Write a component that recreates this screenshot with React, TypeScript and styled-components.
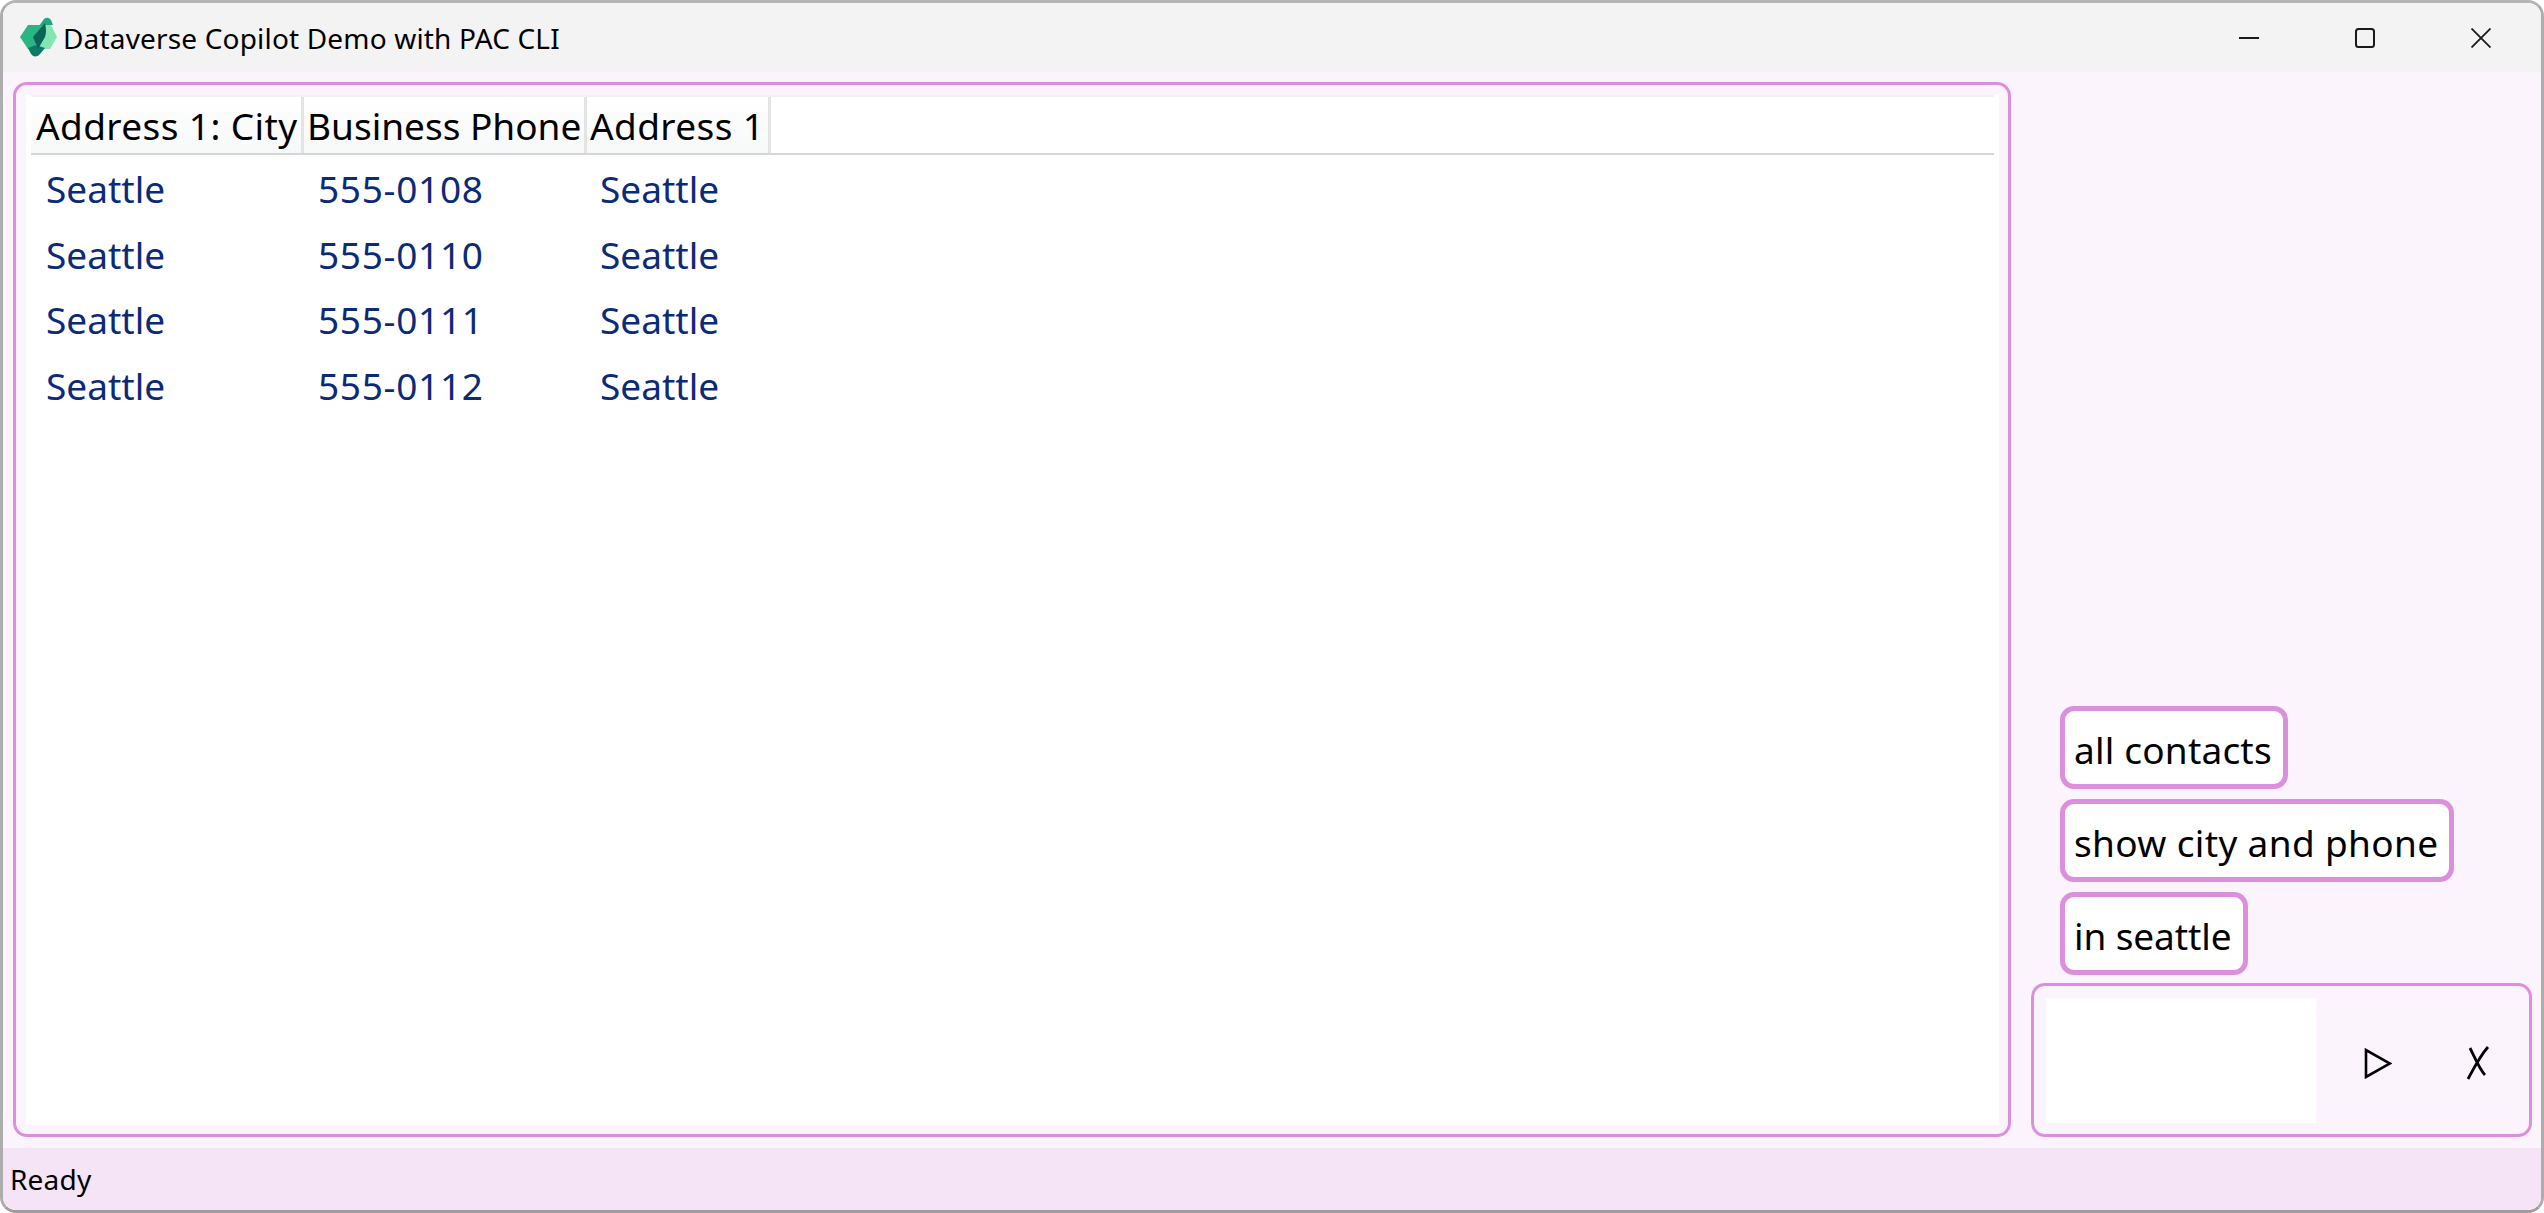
import styled, { createGlobalStyle } from 'styled-components'

const GlobalStyle = createGlobalStyle`
  html, body {
    margin: 0;
    padding: 0;
    background: #fff;
  }
  * {
    box-sizing: border-box;
  }
`

const FONT = `"Noto Sans", "Open Sans", sans-serif`

const Window = styled.div`
  width: 2544px;
  height: 1213px;
  display: flex;
  flex-direction: column;
  border: 3px solid #adadad;
  border-top-color: #b5b5b5;
  border-bottom-color: #9c9c9c;
  border-radius: 16px;
  overflow: hidden;
  background: #fbf4fc;
  font-family: ${FONT};
  color: #000;
`

const TitleBar = styled.div`
  height: 69px;
  flex: none;
  display: flex;
  align-items: center;
  padding-left: 17px;
  background: #f3f3f3;
`

const TitleText = styled.div`
  margin-left: 6px;
  font-size: 28px;
  letter-spacing: 0.17px;
  white-space: nowrap;
`

const WindowButtons = styled.div`
  margin-left: auto;
  display: flex;
  align-items: center;
  padding-right: 2px;
`

const WindowButton = styled.div`
  width: 116px;
  height: 20px;
  display: flex;
  align-items: center;
  justify-content: center;
`

const Body = styled.div`
  flex: 1;
  min-height: 0;
  display: flex;
  gap: 20px;
  padding: 10px 9px 11px 10px;
`

const GridPanel = styled.div`
  flex: 1;
  min-width: 0;
  display: flex;
  border: 3px solid #dd8fdd;
  border-radius: 14px;
  padding: 10px 9px 9px 10px;
`

const DataGrid = styled.div`
  flex: 1;
  background: #fff;
  padding: 0 5px;
`

const HeaderRow = styled.div`
  display: flex;
  height: 60px;
  border-top: 2px solid #f5f0f5;
  border-bottom: 2px solid #d6d6d6;
`

const HeaderCell = styled.div<{ $width: number; $pad: number; $spacing: number }>`
  width: ${({ $width }) => $width}px;
  flex: none;
  padding-left: ${({ $pad }) => $pad}px;
  font-size: 37px;
  letter-spacing: ${({ $spacing }) => $spacing}px;
  line-height: 57px;
  white-space: nowrap;
  background: linear-gradient(#ffffff, #f7f8f9);
  border-right: 3px solid #e4e4e4;
`

const Rows = styled.div`
  display: flex;
  flex-direction: column;
  padding-top: 1px;
`

const DataRow = styled.div`
  display: flex;
  height: 65.5px;
  align-items: center;
`

const DataCell = styled.div<{ $width: number; $spacing: number }>`
  width: ${({ $width }) => $width}px;
  flex: none;
  padding-left: 15px;
  font-size: 37px;
  letter-spacing: ${({ $spacing }) => $spacing}px;
  color: #0b2a78;
  white-space: nowrap;
`

const SidePanel = styled.div`
  width: 501px;
  flex: none;
  display: flex;
  flex-direction: column;
  justify-content: flex-end;
`

const Chips = styled.div`
  display: flex;
  flex-direction: column;
  align-items: flex-start;
  gap: 10px;
  padding-left: 29px;
  margin-bottom: 8px;
`

const Chip = styled.div<{ $spacing: number }>`
  height: 83px;
  display: flex;
  align-items: center;
  padding: 3px 11px 0 9px;
  background: #fff;
  border: 5px solid #dc90dc;
  border-radius: 14px;
  font-size: 37px;
  letter-spacing: ${({ $spacing }) => $spacing}px;
  white-space: nowrap;
`

const InputPanel = styled.div`
  height: 154px;
  display: flex;
  align-items: center;
  border: 3px solid #dd8fdd;
  border-radius: 14px;
  padding: 0 0 0 12px;
`

const InputBox = styled.div`
  width: 270px;
  height: 125px;
  flex: none;
  background: #fff;
`

const IconSlot = styled.div<{ $left: number }>`
  flex: none;
  margin-left: ${({ $left }) => $left}px;
  margin-top: 6px;
  display: flex;
`

const StatusBar = styled.div`
  height: 62px;
  flex: none;
  display: flex;
  align-items: center;
  padding-left: 7px;
  background: #f5e3f6;
  font-size: 28px;
  letter-spacing: 0.2px;
`

const headers = [
  { label: 'Address 1: City', width: 273, pad: 5, spacing: 0.4 },
  { label: 'Business Phone', width: 283, pad: 3, spacing: 0 },
  { label: 'Address 1', width: 184, pad: 3, spacing: 0.4 },
]
const contacts = ['555-0108', '555-0110', '555-0111', '555-0112']
const suggestions = [
  { text: 'all contacts', spacing: 0.2 },
  { text: 'show city and phone', spacing: 0.35 },
  { text: 'in seattle', spacing: -0.1 },
]

const AppLogo = () => (
  <svg width="37" height="41" viewBox="0 0 37 41">
    <path d="M8 8 H24 L14 32 H8 L0 20 Z" fill="#2bb583" />
    <path d="M24 8 H31 L37 20 L30 32 H16 Z" fill="#82e6b2" />
    <path d="M19 9 L24 2 Q28 -1 31 3 L33 8 H24 Z" fill="#23a583" />
    <path d="M8 31 L11 37 Q15 42 20 37 L25 31 L16 28 Z" fill="#0d7a64" />
    <path d="M25 6 L13 20 L18 32 L25 20 Q27 15 25 6 Z" fill="#0b6557" />
  </svg>
)

const MinimizeIcon = () => (
  <svg width="20" height="20" viewBox="0 0 20 20">
    <path d="M0 10 H20" stroke="#1a1a1a" strokeWidth="2" />
  </svg>
)

const MaximizeIcon = () => (
  <svg width="20" height="20" viewBox="0 0 20 20">
    <rect x="1" y="1" width="18" height="18" rx="2.5" fill="none" stroke="#1a1a1a" strokeWidth="2" />
  </svg>
)

const CloseIcon = () => (
  <svg width="20" height="20" viewBox="0 0 20 20">
    <path d="M0.5 0.5 L19.5 19.5 M19.5 0.5 L0.5 19.5" stroke="#1a1a1a" strokeWidth="1.8" />
  </svg>
)

const SendIcon = () => (
  <svg width="28" height="31" viewBox="0 0 28 31">
    <path d="M2 2 V29 L26 15.5 Z" fill="none" stroke="#000" strokeWidth="2.6" />
  </svg>
)

const ClearIcon = () => (
  <svg width="23" height="34" viewBox="0 0 23 34">
    <path d="M4 2 C8 10 14 24 19 29 M22 1 C14 10 8 22 2 33" fill="none" stroke="#000" strokeWidth="2.8" />
  </svg>
)

export default function App() {
  return (
    <>
      <GlobalStyle />
      <Window>
        <TitleBar>
          <AppLogo />
          <TitleText>Dataverse Copilot Demo with PAC CLI</TitleText>
          <WindowButtons>
            <WindowButton>
              <MinimizeIcon />
            </WindowButton>
            <WindowButton>
              <MaximizeIcon />
            </WindowButton>
            <WindowButton>
              <CloseIcon />
            </WindowButton>
          </WindowButtons>
        </TitleBar>
        <Body>
          <GridPanel>
            <DataGrid>
              <HeaderRow>
                {headers.map((h) => (
                  <HeaderCell key={h.label} $width={h.width} $pad={h.pad} $spacing={h.spacing}>
                    {h.label}
                  </HeaderCell>
                ))}
              </HeaderRow>
              <Rows>
                {contacts.map((phone) => (
                  <DataRow key={phone}>
                    <DataCell $width={272} $spacing={0}>Seattle</DataCell>
                    <DataCell $width={282} $spacing={0.7}>{phone}</DataCell>
                    <DataCell $width={184} $spacing={0}>Seattle</DataCell>
                  </DataRow>
                ))}
              </Rows>
            </DataGrid>
          </GridPanel>
          <SidePanel>
            <Chips>
              {suggestions.map((s) => (
                <Chip key={s.text} $spacing={s.spacing}>{s.text}</Chip>
              ))}
            </Chips>
            <InputPanel>
              <InputBox />
              <IconSlot $left={48}>
                <SendIcon />
              </IconSlot>
              <IconSlot $left={74}>
                <ClearIcon />
              </IconSlot>
            </InputPanel>
          </SidePanel>
        </Body>
        <StatusBar>Ready</StatusBar>
      </Window>
    </>
  )
}
